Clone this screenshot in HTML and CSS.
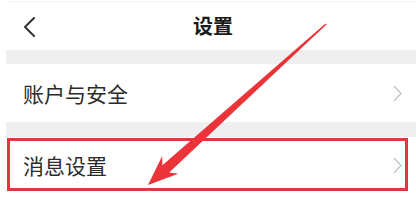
FILE: index.html
```html
<!DOCTYPE html>
<html lang="zh-CN">
<head>
    <meta charset="UTF-8">
    <meta name="viewport" content="width=device-width, initial-scale=1.0">
    <title>设置</title>
    <link rel="stylesheet" href="styles.css">
</head>
<body>
    <div class="screen">
        <div class="top-line"></div>
        <header class="nav-bar">
            <svg class="back-icon" width="14" height="20" viewBox="0 0 14 20">
                <path d="M12 1 L3 10 L12 19" fill="none" stroke="#333" stroke-width="2" stroke-linecap="round" stroke-linejoin="round"/>
            </svg>
            <h1 class="nav-title">设置</h1>
        </header>

        <div class="band"></div>

        <div class="row">
            <span class="row-label">账户与安全</span>
            <svg class="chevron" width="9" height="17" viewBox="0 0 9 17">
                <path d="M1 1 L8 8.5 L1 16" fill="none" stroke="#c6c6c6" stroke-width="1.4"/>
            </svg>
        </div>

        <div class="band band-lower"></div>

        <div class="row row-marked">
            <span class="row-label">消息设置</span>
            <svg class="chevron" width="9" height="17" viewBox="0 0 9 17">
                <path d="M1 1 L8 8.5 L1 16" fill="none" stroke="#c6c6c6" stroke-width="1.4"/>
            </svg>
        </div>

        <!-- annotation arrow drawn over the page -->
        <svg class="pointer" width="416" height="206" viewBox="0 0 416 206">
            <polygon points="148,185 178.3,173.8 169.2,172.6 326.5,24.6 325.5,23.4 162.4,165.2 162.2,156" fill="#ea3439"/>
        </svg>
    </div>
</body>
</html>
```

FILE: styles.css
```css
:root {
    --text-color: #2b2b2b;
    --band-color: #efefef;
    --mark-color: #dc3a40;
}

body, html {
    margin: 0;
    padding: 0;
    background: #ffffff;
    font-family: "Noto Sans CJK SC", "Noto Sans", sans-serif;
}

.screen {
    position: relative;
    width: 416px;
    height: 206px;
    overflow: hidden;
    background: #ffffff;
}

.top-line {
    height: 1px;
    margin: 1px 0 0 7px;
    background: #f3f3f3;
}

.nav-bar {
    position: relative;
    height: 48px;
    display: flex;
    align-items: center;
    justify-content: center;
}

.back-icon {
    position: absolute;
    left: 22px;
    top: 15px;
}

.nav-title {
    margin: 0 0 0 10px;
    font-size: 20px;
    font-weight: bold;
    color: #1a1a1a;
    line-height: 1;
}

.band {
    height: 14px;
    margin-left: 6px;
    background: var(--band-color);
}

.band-lower {
    height: 15px;
}

.row {
    position: relative;
    height: 58px;
    display: flex;
    align-items: center;
    justify-content: space-between;
    padding: 0 14px 0 23px;
}

.row-label {
    font-size: 21px;
    color: var(--text-color);
    line-height: 1;
}

.row-marked {
    height: 56px;
}

.row-marked::after {
    content: "";
    position: absolute;
    left: 7px;
    right: 8px;
    top: 1px;
    bottom: 2px;
    border: 3.5px solid var(--mark-color);
    pointer-events: none;
}

.pointer {
    position: absolute;
    left: 0;
    top: 0;
    pointer-events: none;
}
```
